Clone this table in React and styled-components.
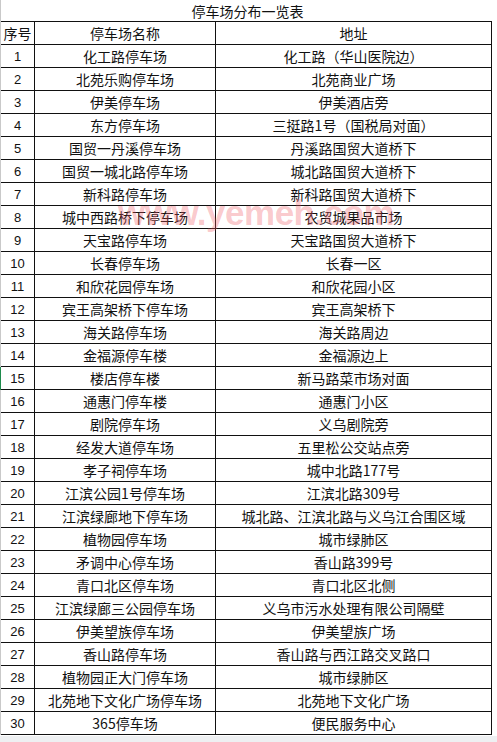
import React from "react";
import styled, { createGlobalStyle } from "styled-components";

const GlobalStyle = createGlobalStyle`
  html, body {
    margin: 0;
    padding: 0;
    background: #ffffff;
  }
  body {
    font-family: "Noto Sans CJK SC", "Liberation Sans", sans-serif;
    color: #111;
  }
`;

const Page = styled.div`
  position: relative;
  width: 497px;
  height: 742px;
  overflow: hidden;
  display: flex;
  flex-direction: column;
`;

const Sheet = styled.div`
  display: grid;
  grid-template-columns: 34px 181px 276px;
  width: 492px;
  border-left: 1px solid #c9c9c9;
  box-sizing: border-box;
`;

const Title = styled.div`
  grid-column: 1 / -1;
  height: 22px;
  box-sizing: border-box;
  border-bottom: 1px solid #111;
  display: flex;
  align-items: center;
  justify-content: center;
  font-size: 14px;
  padding-top: 1px;
  padding-left: 2px;
`;

const Cell = styled.div`
  height: 23px;
  box-sizing: border-box;
  border-bottom: 1px solid #111;
  border-right: 1px solid #111;
  display: flex;
  align-items: center;
  justify-content: center;
  white-space: nowrap;
  font-size: ${(p) => (p.$num ? "13px" : "14px")};
  font-family: ${(p) =>
    p.$num
      ? `"Liberation Sans", "Noto Sans CJK SC", sans-serif`
      : `"Noto Sans CJK SC", "Liberation Sans", sans-serif`};
  box-shadow: ${(p) => (p.$mark ? "-2px 0 0 #1e8a4c" : "none")};
`;

const Footer = styled.div`
  margin-top: 1px;
  flex: 1;
  background: #eef0f2;
`;

const Watermark = styled.div`
  position: absolute;
  left: 118px;
  top: 193px;
  font-family: "Liberation Sans", sans-serif;
  font-weight: bold;
  font-size: 35px;
  letter-spacing: -0.5px;
  color: rgba(240, 90, 100, 0.32);
  pointer-events: none;
`;

const rows = [
  ["化工路停车场", "化工路（华山医院边）"],
  ["北苑乐购停车场", "北苑商业广场"],
  ["伊美停车场", "伊美酒店旁"],
  ["东方停车场", "三挺路1号（国税局对面）"],
  ["国贸一丹溪停车场", "丹溪路国贸大道桥下"],
  ["国贸一城北路停车场", "城北路国贸大道桥下"],
  ["新科路停车场", "新科路国贸大道桥下"],
  ["城中西路桥下停车场", "农贸城果品市场"],
  ["天宝路停车场", "天宝路国贸大道桥下"],
  ["长春停车场", "长春一区"],
  ["和欣花园停车场", "和欣花园小区"],
  ["宾王高架桥下停车场", "宾王高架桥下"],
  ["海关路停车场", "海关路周边"],
  ["金福源停车楼", "金福源边上"],
  ["楼店停车楼", "新马路菜市场对面"],
  ["通惠门停车楼", "通惠门小区"],
  ["剧院停车场", "义乌剧院旁"],
  ["经发大道停车场", "五里松公交站点旁"],
  ["孝子祠停车场", "城中北路177号"],
  ["江滨公园1号停车场", "江滨北路309号"],
  ["江滨绿廊地下停车场", "城北路、江滨北路与义乌江合围区域"],
  ["植物园停车场", "城市绿肺区"],
  ["矛调中心停车场", "香山路399号"],
  ["青口北区停车场", "青口北区北侧"],
  ["江滨绿廊三公园停车场", "义乌市污水处理有限公司隔壁"],
  ["伊美望族停车场", "伊美望族广场"],
  ["香山路停车场", "香山路与西江路交叉路口"],
  ["植物园正大门停车场", "城市绿肺区"],
  ["北苑地下文化广场停车场", "北苑地下文化广场"],
  ["365停车场", "便民服务中心"],
];

export default function App() {
  return (
    <Page>
      <GlobalStyle />
      <Sheet>
        <Title>停车场分布一览表</Title>
        <Cell>序号</Cell>
        <Cell>停车场名称</Cell>
        <Cell>地址</Cell>
        {rows.map(([name, addr], i) => (
          <React.Fragment key={i}>
            <Cell $num $mark={i === 14}>
              {i + 1}
            </Cell>
            <Cell>{name}</Cell>
            <Cell>{addr}</Cell>
          </React.Fragment>
        ))}
      </Sheet>
      <Footer />
      <Watermark>www.yemeh.com</Watermark>
    </Page>
  );
}
